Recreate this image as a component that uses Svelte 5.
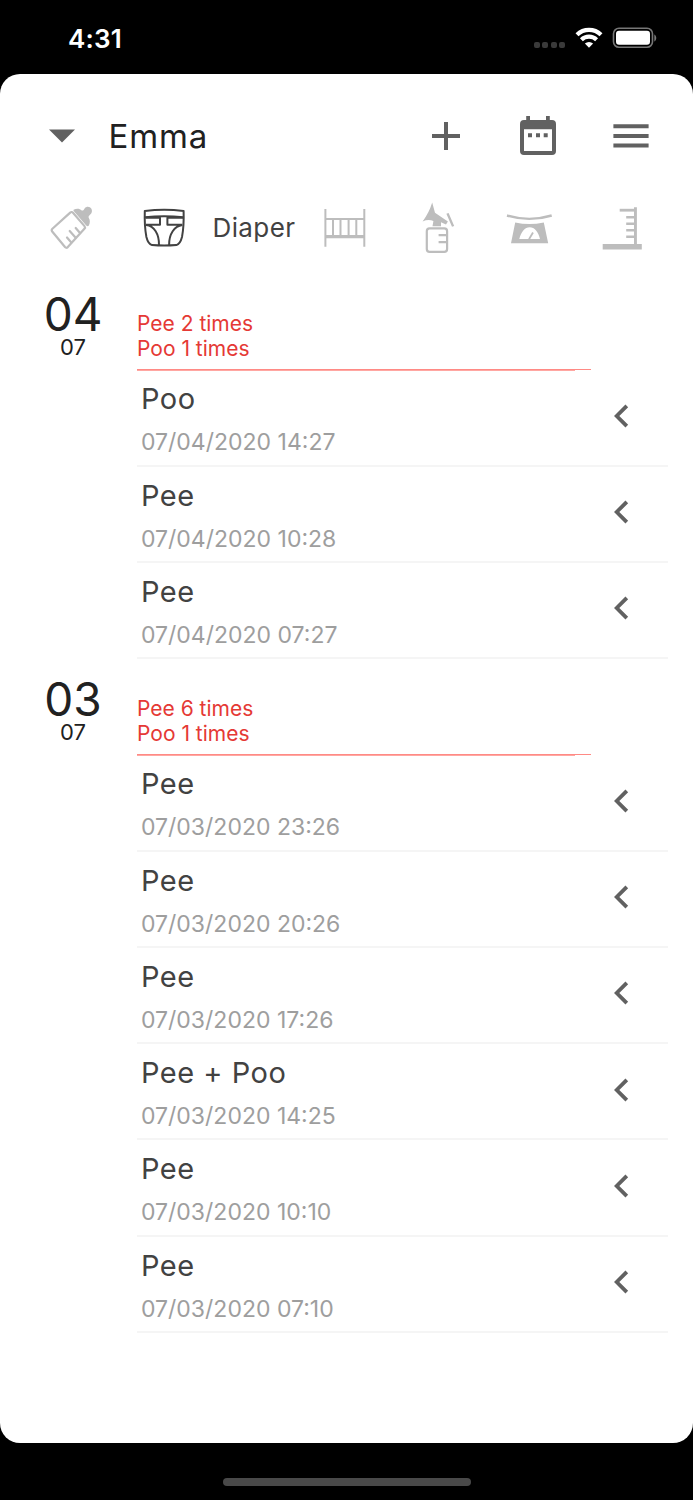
<script lang="ts">
	type Day = {
		day: string;
		month: string;
		summary: string[];
		entries: { label: string; time: string }[];
	};

	const name = "Emma";

	const days: Day[] = [
		{
			day: "04",
			month: "07",
			summary: ["Pee 2 times", "Poo 1 times"],
			entries: [
				{ label: "Poo", time: "07/04/2020 14:27" },
				{ label: "Pee", time: "07/04/2020 10:28" },
				{ label: "Pee", time: "07/04/2020 07:27" }
			]
		},
		{
			day: "03",
			month: "07",
			summary: ["Pee 6 times", "Poo 1 times"],
			entries: [
				{ label: "Pee", time: "07/03/2020 23:26" },
				{ label: "Pee", time: "07/03/2020 20:26" },
				{ label: "Pee", time: "07/03/2020 17:26" },
				{ label: "Pee + Poo", time: "07/03/2020 14:25" },
				{ label: "Pee", time: "07/03/2020 10:10" },
				{ label: "Pee", time: "07/03/2020 07:10" }
			]
		}
	];
</script>

<div class="phone">
	<div class="status">
		<span class="clock">4:31</span>
		<div class="indicators">
			<div class="dots"><i></i><i></i><i></i><i></i></div>
			<svg class="wifi" width="28" height="22" viewBox="0 0 28 22">
				<g fill="none" stroke="#fff" stroke-width="4.2">
					<path d="M2 7.7a17.2 17.2 0 0 1 24 0" />
					<path d="M6.4 12.7a11 11 0 0 1 15.2 0" />
				</g>
				<path fill="#fff" d="M14 20.7l-4.1-4.1a5.9 5.9 0 0 1 8.2 0z" />
			</svg>
			<svg class="battery" width="46" height="22" viewBox="0 0 46 22">
				<rect x="1.5" y="1.2" width="39" height="19" rx="5.5" fill="none" stroke="#777" stroke-width="1.6" />
				<rect x="4" y="3.8" width="34" height="14" rx="3" fill="#fff" />
				<path fill="#777" d="M42.3 7.5c2.6 1.2 2.6 5.8 0 7z" />
			</svg>
		</div>
	</div>

	<main class="sheet">
		<header>
			<button class="child" aria-label="Choose child">
				<svg width="26" height="14" viewBox="0 0 26 14"><path d="M0 .5h26L13 13.500z" /></svg>
			</button>
			<h1>{name}</h1>
			<button aria-label="Add">
				<svg width="28" height="28" viewBox="0 0 28 28"><path d="M12 0h4v12h12v4H16v12h-4V16H0v-4h12z" /></svg>
			</button>
			<button aria-label="Calendar">
				<svg width="36" height="40" viewBox="0 0 36 40">
					<path
						fill-rule="evenodd"
						d="M6.2 0h3.8v4h16V0h3.8v4H32a4 4 0 0 1 4 4v27a4 4 0 0 1-4 4H4a4 4 0 0 1-4-4V8a4 4 0 0 1 4-4h2.200zM4 13.300V35h28V13.300z"
					/>
					<path d="M8 17.300h4v4H8zM16 17.300h4v4h-4zM23.700 17.300h4v4h-4z" />
				</svg>
			</button>
			<button aria-label="Menu">
				<svg width="36" height="24" viewBox="0 0 36 24"><path d="M.4.3h35.200v4H.4zM.4 9.900h35.200v4H.4zM.4 19.500h35.200v4H.4z" /></svg>
			</button>
		</header>

		<nav>
			<button aria-label="Bottle">
				<svg viewBox="0 0 60 60">
					<g class="line" stroke-width="2.2" stroke-linejoin="round" stroke-linecap="round">
						<path d="M29.200 14.600q1.500-1.300 2.800.2l11.500 13.300q1.100 1.400-.1 2.700L26.800 49.100q-1.500 1.400-2.800-.1L11.200 33.500q-1.100-1.500.2-2.700z" />
						<path d="M30.300 44.500l-4.300-5M34.700 39.700l-6-6.700M39 35l-4.300-5" />
					</g>
					<path d="M32.600 11.800c3.200-1.900 6.200-1.200 8.100.6 1.600.3 2.100-.7 2.900-2 3.700-4.200 9.500.7 6.600 5-1.200 1.700-2.900 2.200-2.600 4 1.700 2.700 1.600 5.400.1 8.300-.9.9-1.900.4-2.700-.5L33.100 13.600c-.6-.7-.9-1.200-.5-1.800z" />
				</svg>
			</button>
			<button class="active" aria-label="Diaper">
				<svg viewBox="0 0 60 60">
					<g class="line" stroke-width="2" stroke-linejoin="round">
						<path d="M10.800 12.900Q30.200 10.600 49.600 12.900q.5 15-1.600 26.100-1.800 6.900-5.600 8.100-12.200 1-24.400 0-3.900-1.200-5.600-8.100-2.100-11.100-1.600-26.100z" />
						<path d="M11 19.300Q30 17.300 49.300 19.300" />
						<path d="M11.500 19.700H26v7H12M49 19.700H33.400v7h15M12.200 27c8 1 13 9 12.800 20.200M48.400 27c-8 1-13.500 9-13.300 20.200" />
					</g>
				</svg>
			</button>
			<span class="label">Diaper</span>
			<button aria-label="Sleep">
				<svg viewBox="0 0 60 60">
					<path class="line" stroke-width="2" d="M10.400 11v37.700M49.300 11v37.700M10 20.900h39M18 21v17M25.500 21v17M33.600 21v17M41.300 21v17" />
					<path d="M10 37h39v3.300H10z" />
				</svg>
			</button>
			<button aria-label="Pump">
				<svg viewBox="0 0 60 60">
					<path d="M24.200 4.500l2.800 10.200L39.900 23.500 38 26.600l-5-2.300V28.200h-8.500l.9-5.200q-5-2-10.800.4Q21 15 24.200 4.500z" />
					<rect class="line" stroke-width="2.200" x="18.800" y="30.400" width="20.300" height="23.500" rx="2.800" />
					<path class="line" stroke-width="2.400" d="M30.600 37.100H39M30.600 44.100H39M39.500 15.400l5.600 13" />
				</svg>
			</button>
			<button aria-label="Weight">
				<svg viewBox="0 0 60 60">
					<path class="line" stroke-width="2.400" d="M7 17.500q22.300 6.800 44.700 0" />
					<path fill-rule="evenodd" d="M15.200 24.500q14.100 3 28.600 0L48.200 45.200H11zM19.300 41H40C38.500 34 34.500 29.300 29.700 29.300S21 34 19.300 41z" />
					<path class="line" stroke-width="1.800" d="M29 41.200l4-6.700" />
				</svg>
			</button>
			<button aria-label="Height">
				<svg viewBox="0 0 60 60">
					<path d="M10.700 46.100H42V9.200h2.900v36.900h4.900v5.400H10.700z" />
					<path class="line" stroke-width="2.800" d="M27.700 12.200H42" />
					<path class="line" stroke-width="2.400" d="M34.200 19.300H42M34.200 25.700H42M34.200 32.300H42M34.200 38.700H42" />
				</svg>
			</button>
		</nav>

		{#each days as { day, month, summary, entries }}
			<section>
				<div class="date">
					<span class="day">{day}</span>
					<span class="month">{month}</span>
				</div>
				<div class="records">
					<div class="summary">
						{#each summary as line}
							<p>{line}</p>
						{/each}
					</div>
					{#each entries as { label, time }}
						<div class="entry">
							<div>
								<h2>{label}</h2>
								<time>{time}</time>
							</div>
							<svg width="16" height="24" viewBox="0 0 16 24">
								<path class="line" stroke-width="3.800" d="M13.800 1.800L3.700 12l10.100 10.200" />
							</svg>
						</div>
					{/each}
				</div>
			</section>
		{/each}
	</main>

	<div class="home"></div>
</div>

<style>
	:global(body) {
		margin: 0;
		background: #000;
	}

	.phone {
		width: 693px;
		height: 1500px;
		overflow: hidden;
		background: #000;
		font-family: Inter, sans-serif;
		display: flex;
		flex-direction: column;
		align-items: center;
	}

	.status {
		box-sizing: border-box;
		width: 100%;
		height: 74px;
		padding: 3px 35px 0 68px;
		display: flex;
		align-items: center;
		justify-content: space-between;
		color: #fff;
	}

	.clock {
		font-size: 26px;
		font-weight: 600;
		letter-spacing: 0.2px;
	}

	.indicators {
		display: flex;
		align-items: center;
		padding-bottom: 1px;
	}

	.dots {
		display: flex;
		gap: 2.4px;
		padding-top: 13px;
		margin-right: 10px;
	}

	.dots i {
		width: 6px;
		height: 6px;
		border-radius: 2px;
		background: #3a3a3a;
	}

	.battery {
		margin-left: 9px;
	}

	.sheet {
		width: 100%;
		height: 1369px;
		border-radius: 20px;
		background: #fff;
	}

	button {
		margin: 0;
		padding: 0;
		border: none;
		background: none;
		color: inherit;
		display: flex;
		align-items: center;
		justify-content: center;
	}

	svg {
		display: block;
		fill: currentColor;
	}

	.line {
		fill: none;
		stroke: currentColor;
	}

	header {
		height: 124px;
		padding-left: 15.500px;
		display: grid;
		grid-template-columns: 92.500px 291.500px 92.500px 92.500px 92.500px;
		align-items: center;
		color: #616161;
	}

	h1 {
		margin: 0;
		padding-left: 0.5px;
		font-size: 33px;
		font-weight: 400;
		letter-spacing: 0.9px;
		color: #212121;
	}

	nav {
		height: 60px;
		padding-left: 25px;
		display: grid;
		grid-template-columns: 92px 93.500px 88.500px 92.500px 92.500px 92px 92px;
		align-items: center;
		color: #bdbdbd;
	}

	nav svg {
		width: 60px;
		height: 60px;
	}

	.active,
	.label {
		color: #424242;
	}

	.label {
		padding: 0 0 2px 2px;
		font-size: 26px;
		letter-spacing: 0.4px;
	}

	section {
		display: grid;
		grid-template-columns: 137px 531px;
	}

	section:first-of-type {
		margin-top: 16px;
	}

	.date {
		padding: 14px 0 0 9px;
		display: flex;
		flex-direction: column;
		align-items: center;
		color: #212121;
	}

	.day {
		font-size: 46px;
		line-height: 52px;
	}

	.month {
		font-size: 22px;
		line-height: 15px;
	}

	/* the lower half of the rule stops short of its right end */
	.summary {
		box-sizing: border-box;
		width: 454px;
		height: 97px;
		margin-bottom: -0.750px;
		padding-top: 37px;
		background:
			linear-gradient(#ff8a85, #ff8a85) left bottom 1px / 454px 1px no-repeat,
			linear-gradient(#ffa7a2, #ffa7a2) left bottom / 438px 1px no-repeat;
		color: #e53935;
	}

	p {
		margin: 0;
		font-size: 21px;
		line-height: 25.300px;
		letter-spacing: 0;
	}

	.entry {
		box-sizing: border-box;
		height: 96.250px;
		padding: 10px 39px 0 4px;
		border-bottom: 2px solid #f5f5f5;
		display: flex;
		align-items: flex-start;
		justify-content: space-between;
		color: #616161;
	}

	.entry svg {
		margin-top: 23.500px;
	}

	h2 {
		margin: 2px 0 12px;
		font-size: 29px;
		line-height: 34px;
		font-weight: 400;
		letter-spacing: 0.5px;
		color: #424242;
	}

	time {
		display: block;
		font-size: 23px;
		line-height: 28px;
		letter-spacing: 0;
		color: #9e9e9e;
	}

	.home {
		width: 248px;
		height: 8px;
		margin-top: 35px;
		border-radius: 4px;
		background: #494949;
	}
</style>
